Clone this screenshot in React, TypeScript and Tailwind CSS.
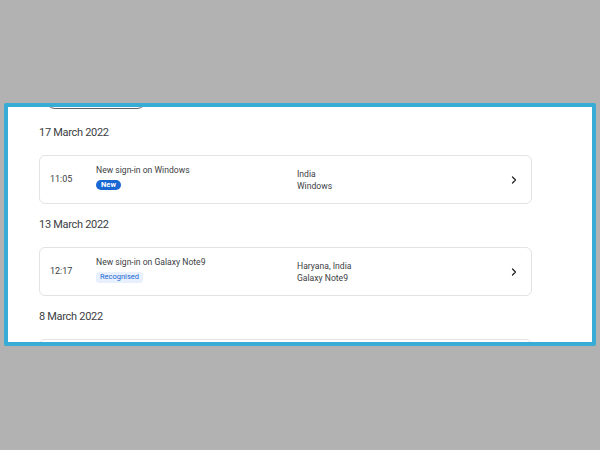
import { ChevronRight } from "lucide-react";

type Item = {
  time: string;
  title: string;
  badge: "new" | "recognised";
  place: string;
  device: string;
};

const groups: { date: string; items: Item[] }[] = [
  {
    date: "17 March 2022",
    items: [{ time: "11:05", title: "New sign-in on Windows", badge: "new", place: "India", device: "Windows" }],
  },
  {
    date: "13 March 2022",
    items: [
      {
        time: "12:17",
        title: "New sign-in on Galaxy Note9",
        badge: "recognised",
        place: "Haryana, India",
        device: "Galaxy Note9",
      },
    ],
  },
  { date: "8 March 2022", items: [] },
];

const SignInRow = ({ item }: { item: Item }) => (
  <div className="mt-[14px] flex h-[49px] w-[493px] items-center rounded-[6px] border border-[#e3e3e3] bg-white pl-[10px] pr-[11px]">
    <span className="w-[46px] text-[9px] text-[#3c4043]">{item.time}</span>
    <div className="flex w-[201px] flex-col gap-[4px] pb-[4px]">
      <span className="text-[8.6px] leading-[11px] text-[#3c4043]">{item.title}</span>
      {item.badge === "new" ? (
        <span className="flex h-[10px] w-[25px] items-center justify-center rounded-full bg-[#1967d2] text-[7.5px] font-bold text-white">
          New
        </span>
      ) : (
        <span className="flex h-[11px] w-[47px] items-center justify-center rounded-[3px] bg-[#e8f0fe] text-[7.5px] text-[#1967d2]">
          Recognised
        </span>
      )}
    </div>
    <div className="flex flex-1 flex-col text-[8.6px] leading-[12px] text-[#3c4043]">
      <span>{item.place}</span>
      <span>{item.device}</span>
    </div>
    <ChevronRight className="h-[12px] w-[12px] text-[#202124]" strokeWidth={2.5} />
  </div>
);

export default function App() {
  return (
    <div className="h-[450px] w-[600px] bg-[#b2b2b2] px-[4px] pt-[103px] font-['Roboto',sans-serif]">
      <div className="h-[243px] overflow-hidden rounded-[2px] border-4 border-[#38acd4] bg-white">
        <div className="ml-[37px] -mt-[18px] h-[20px] w-[102px] rounded-full border border-[#5f6368]" />
        <div className="pl-[31px]">
          {groups.map((g, i) => (
            <div key={g.date} className={i === 0 ? "mt-[16px]" : "mt-[13px]"}>
              <h2 className="text-[11px] leading-[16px] tracking-[-0.3px] text-[#3c4043]">{g.date}</h2>
              {g.items.map((it) => (
                <SignInRow key={it.time} item={it} />
              ))}
              {g.items.length === 0 && (
                <div className="mt-[14px] h-[49px] w-[493px] rounded-[6px] border border-[#e3e3e3]" />
              )}
            </div>
          ))}
        </div>
      </div>
    </div>
  );
}
